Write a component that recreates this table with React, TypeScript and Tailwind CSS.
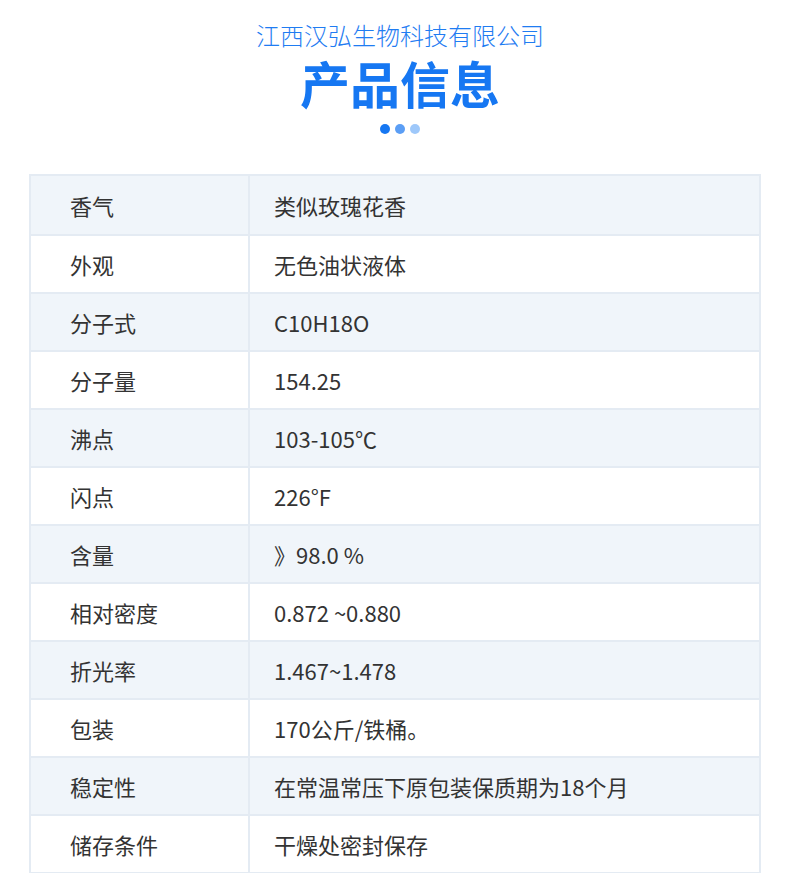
import React from "react";

const rows: [string, string][] = [
  ["香气", "类似玫瑰花香"],
  ["外观", "无色油状液体"],
  ["分子式", "C10H18O"],
  ["分子量", "154.25"],
  ["沸点", "103-105℃"],
  ["闪点", "226°F"],
  ["含量", "》98.0 %"],
  ["相对密度", "0.872 ~0.880"],
  ["折光率", "1.467~1.478"],
  ["包装", "170公斤/铁桶。"],
  ["稳定性", "在常温常压下原包装保质期为18个月"],
  ["储存条件", "干燥处密封保存"],
];

export default function App() {
  return (
    <div
      className="w-[790px] h-[873px] bg-white overflow-hidden"
      style={{ fontFamily: '"Noto Sans CJK SC", "Noto Sans", sans-serif' }}
    >
      {/* header */}
      <div className="flex flex-col items-center pt-[21px] pl-[10px]">
        <div className="text-[24px] leading-[28px] text-[#1f7cf2] font-light">
          江西汉弘生物科技有限公司
        </div>
        <div className="text-[50px] leading-[56px] font-bold text-[#1677f2] mt-[5px]">
          产品信息
        </div>
        <div className="flex gap-[5px] mt-[14px]">
          <span className="w-[10px] h-[10px] rounded-full bg-[#1677f2]" />
          <span className="w-[10px] h-[10px] rounded-full bg-[#5b9ef5]" />
          <span className="w-[10px] h-[10px] rounded-full bg-[#9ec8fa]" />
        </div>
      </div>

      {/* table */}
      <div className="mt-[40px] ml-[29px] w-[732px] border-2 border-[#e4ebf3]">
        {rows.map(([k, v], i) => (
          <div
            key={k}
            className={`flex h-[58px] text-[22px] text-[#333333] ${
              i > 0 ? "border-t-2 border-[#e4ebf3]" : ""
            } ${i % 2 === 0 ? "bg-[#f0f5fa]" : "bg-white"}`}
          >
            <div className="w-[219px] flex items-center pl-[39px] border-r-2 border-[#e4ebf3]">
              {k}
            </div>
            <div className="flex-1 flex items-center pl-[24px]">{v}</div>
          </div>
        ))}
      </div>
    </div>
  );
}
